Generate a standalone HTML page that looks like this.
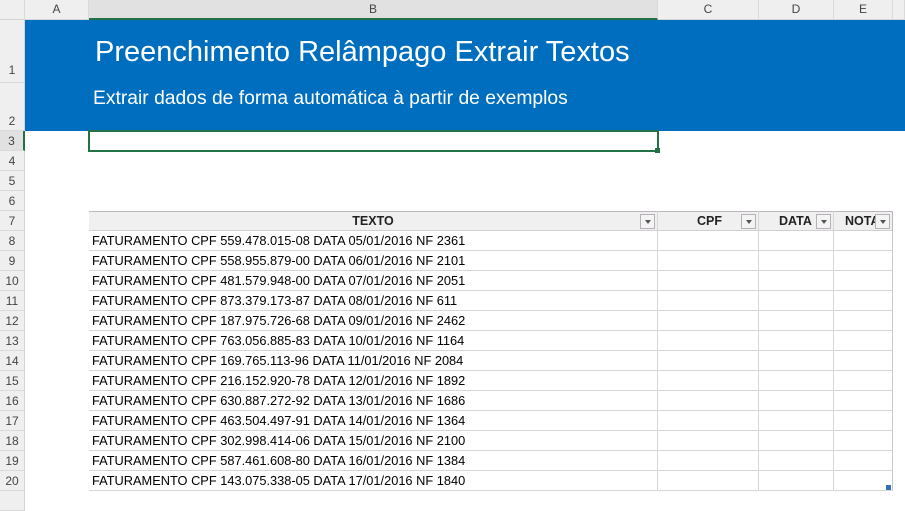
<!DOCTYPE html><html><head><meta charset="utf-8"><style>
*{margin:0;padding:0;box-sizing:border-box}
body{width:905px;height:503px;overflow:hidden;background:#fff;font-family:"Liberation Sans",sans-serif;position:relative}
.a{position:absolute}
.ch{top:0;height:20px;background:#efefef;border-bottom:1px solid #d4d4d4;font-size:12px;color:#444;text-align:center;line-height:19px;border-right:1px solid #dadada}
.rh{left:0;width:25px;background:#efefef;border-right:1px solid #d4d4d4;border-bottom:1px solid #dadada;font-size:12px;color:#444;text-align:center}
.td{font-size:12.8px;color:#000;line-height:20px;height:20px;border-bottom:1px solid #d6d6d6;border-right:1px solid #d6d6d6;white-space:nowrap;overflow:hidden}
.dd{position:absolute;top:3px;width:15px;height:15px;border:1px solid #b8b0b8;background:#f4f4f4}
.dd:after{content:"";position:absolute;left:4px;top:5px;border-left:3px solid transparent;border-right:3px solid transparent;border-top:4px solid #555}
</style></head><body>
<div class="a ch" style="left:0;width:25px;background:#efefef"></div>
<div class="a ch" style="left:25px;width:64px">A</div>
<div class="a ch" style="left:89px;width:569px;background:#e1e1e1;border-bottom:2px solid #217346">B</div>
<div class="a ch" style="left:658px;width:101px">C</div>
<div class="a ch" style="left:759px;width:75px">D</div>
<div class="a ch" style="left:834px;width:59px">E</div>
<div class="a ch" style="left:893px;width:12px"></div>

<div class="a" style="left:25px;top:20px;width:880px;height:111px;background:#006ebf"></div>
<div class="a" style="left:95px;top:36px;color:#fff;font-size:29px;white-space:nowrap">Preenchimento Relâmpago Extrair Textos</div>
<div class="a" style="left:93px;top:88px;color:#fff;font-size:19.3px;white-space:nowrap">Extrair dados de forma automática à partir de exemplos</div>
<div class="a" style="left:88px;top:130px;width:571px;height:22px;border:2px solid #217346"></div>
<div class="a" style="left:655px;top:148px;width:5px;height:5px;background:#217346"></div>

<div class="a rh" style="top:20px;height:63px;line-height:100px">1</div>
<div class="a rh" style="top:83px;height:48px;line-height:76px">2</div>
<div class="a rh" style="top:131px;height:20px;line-height:20px;background:#e1e1e1;border-right:2px solid #217346">3</div>
<div id="rows"></div>

<div class="a" style="left:89px;top:211px;width:804px;height:20px;background:#f0f0f0;border-top:1px solid #bdb6bd;border-bottom:1px solid #d0d0d0"></div>
<div class="a" style="left:89px;top:211px;width:569px;height:20px;font-weight:bold;font-size:12.5px;text-align:center;line-height:20px;color:#222;border-right:1px solid #d6d6d6">TEXTO<div class="dd" style="left:551px"></div></div>
<div class="a" style="left:658px;top:211px;width:101px;height:20px;font-weight:bold;font-size:12.5px;line-height:20px;color:#222;border-right:1px solid #d6d6d6"><span style="position:absolute;left:39px">CPF</span><div class="dd" style="left:83px"></div></div>
<div class="a" style="left:759px;top:211px;width:75px;height:20px;font-weight:bold;font-size:12.5px;line-height:20px;color:#222;border-right:1px solid #d6d6d6"><span style="position:absolute;left:20px">DATA</span><div class="dd" style="left:57px"></div></div>
<div class="a" style="left:834px;top:211px;width:59px;height:20px;font-weight:bold;font-size:12.5px;line-height:20px;color:#222;border-right:1px solid #bdb6bd;overflow:hidden"><span style="position:absolute;left:11px">NOTA</span><div class="dd" style="left:41px"></div></div>
<div class="a" style="left:886px;top:485px;width:5px;height:5px;background:#2f6fb3"></div>
<script>
var d=[["559.478.015-08","05","2361"],["558.955.879-00","06","2101"],["481.579.948-00","07","2051"],["873.379.173-87","08","611"],["187.975.726-68","09","2462"],["763.056.885-83","10","1164"],["169.765.113-96","11","2084"],["216.152.920-78","12","1892"],["630.887.272-92","13","1686"],["463.504.497-91","14","1364"],["302.998.414-06","15","2100"],["587.461.608-80","16","1384"],["143.075.338-05","17","1840"]];
var h="";
for(var r=4;r<=21;r++){var t=131+(r-3)*20;h+='<div class="a rh" style="top:'+t+'px;height:20px;line-height:20px">'+(r<=20?r:'')+'</div>';}
for(var i=0;i<d.length;i++){var t=231+i*20;
h+='<div class="a td" style="left:89px;top:'+t+'px;width:569px;padding-left:3px">FATURAMENTO CPF '+d[i][0]+' DATA '+d[i][1]+'/01/2016 NF '+d[i][2]+'</div>';
h+='<div class="a td" style="left:658px;top:'+t+'px;width:101px"></div><div class="a td" style="left:759px;top:'+t+'px;width:75px"></div><div class="a td" style="left:834px;top:'+t+'px;width:59px;border-right-color:#c8c8c8"></div>';}
document.getElementById("rows").innerHTML=h;
</script>
</body></html>
